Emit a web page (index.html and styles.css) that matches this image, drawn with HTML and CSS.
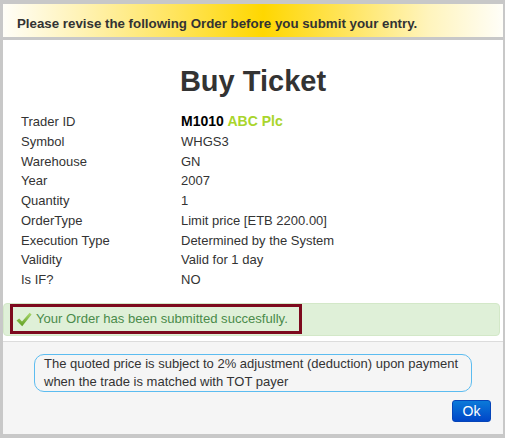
FILE: index.html
```html
<!DOCTYPE html>
<html>
<head>
<meta charset="utf-8">
<link rel="stylesheet" href="styles.css">
</head>
<body>
<div class="modal">
  <div class="modal-header">Please revise the following Order before you submit your entry.</div>
  <div class="modal-body">
    <h2 class="title">Buy Ticket</h2>
    <div class="details">
      <div class="label">Trader ID</div><div class="value"><b class="trader">M1010</b> <b class="firm">ABC Plc</b></div>
      <div class="label">Symbol</div><div class="value">WHGS3</div>
      <div class="label">Warehouse</div><div class="value">GN</div>
      <div class="label">Year</div><div class="value">2007</div>
      <div class="label">Quantity</div><div class="value">1</div>
      <div class="label">OrderType</div><div class="value">Limit price [ETB 2200.00]</div>
      <div class="label">Execution Type</div><div class="value">Determined by the System</div>
      <div class="label">Validity</div><div class="value">Valid for 1 day</div>
      <div class="label">Is IF?</div><div class="value">NO</div>
    </div>
    <div class="alert">
      <div class="highlight">
        <svg class="check" width="16" height="15" viewBox="0 0 16 15">
          <defs>
            <linearGradient id="g" x1="0" y1="0" x2="0" y2="1">
              <stop offset="0" stop-color="#a9d86e"/>
              <stop offset="1" stop-color="#5f9e22"/>
            </linearGradient>
          </defs>
          <path d="M0.5 8.5 L3.2 6.4 L6 9.4 L13.6 0.8 L15.6 2.6 L6.2 14.2 Z" fill="url(#g)"/>
        </svg>
        <span>Your Order has been submitted succesfully.</span>
      </div>
    </div>
  </div>
  <div class="modal-footer">
    <div class="note">The quoted price is subject to 2% adjustment (deduction) upon payment when the trade is matched with TOT payer</div>
    <div class="actions"><button class="btn">Ok</button></div>
  </div>
</div>
</body>
</html>
```
FILE: styles.css
```css
html, body {
  margin: 0;
  padding: 0;
}
body {
  background: #c8c8c8;
  padding: 4px 2px 4px 3px;
  font-family: "Liberation Sans", Arial, sans-serif;
  color: #333;
  font-size: 13px;
}
.modal {
  width: 500px;
  height: 430px;
  background: #fff;
  display: flex;
  flex-direction: column;
}
.modal-header {
  height: 36px;
  box-sizing: border-box;
  border-bottom: 3px solid #c8c8c8;
  background: linear-gradient(to right, #fffef8 0%, #fff3b8 15%, #ffe45a 35%, #ffd700 52%, #ffe45a 68%, #fff4bc 85%, #fffef8 100%);
  font-weight: bold;
  font-size: 13.3px;
  line-height: 33px;
  padding: 3px 0 0 14px;
  color: #333;
}
.modal-body {
  padding-top: 25px;
  flex: 1;
  border-bottom: 1px solid #dcdcdc;
  box-sizing: border-box;
}
.title {
  margin: 0;
  text-align: center;
  font-size: 29px;
  line-height: 33px;
  font-weight: bold;
  color: #333;
}
.details {
  margin-top: 14px;
  padding-left: 18px;
  display: grid;
  grid-template-columns: 160px 1fr;
  line-height: 19.75px;
}
.trader {
  color: #000;
  font-size: 14px;
}
.firm {
  color: #a9d52c;
  font-size: 14px;
}
.alert {
  margin: 13px 3px 0 0;
  background: #dff0d8;
  border: 1px solid #d3e8c8;
  border-radius: 4px;
  padding: 0 0 1px 6px;
  height: 33px;
  box-sizing: border-box;
}
.highlight {
  width: 292px;
  height: 30px;
  box-sizing: border-box;
  border: 3px solid #7d0a1e;
  display: flex;
  align-items: center;
  padding-left: 3px;
  color: #4a8b4a;
  font-size: 13.1px;
  white-space: nowrap;
}
.check {
  margin-right: 4px;
  margin-top: 2px;
}
.modal-footer {
  background: #f5f5f5;
  height: 92px;
  padding: 12px 12px 0 12px;
  box-sizing: border-box;
}
.note {
  width: 438px;
  margin: 0 auto;
  box-sizing: border-box;
  border: 1px solid #5cbcf0;
  border-radius: 10px;
  padding: 0 8px 0 9px;
  line-height: 18px;
  color: #333;
}
.actions {
  display: flex;
  justify-content: flex-end;
  margin-top: 8px;
}
.btn {
  width: 39px;
  height: 22px;
  border: 1px solid #0645b8;
  border-radius: 3px;
  background: linear-gradient(#0a7ad9, #0046c8);
  color: #fff;
  font-family: "Liberation Sans", Arial, sans-serif;
  font-size: 14px;
  padding: 0;
}
```
